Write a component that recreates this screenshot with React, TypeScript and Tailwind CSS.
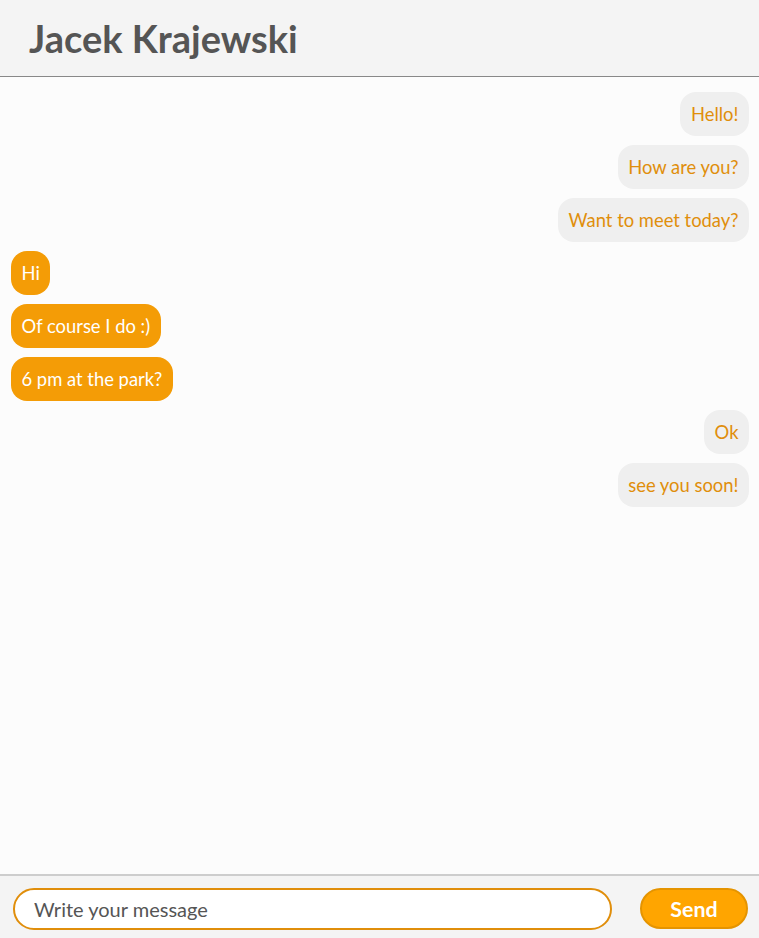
import React from 'react';

type Msg = { text: string; mine: boolean };

const messages: Msg[] = [
  { text: 'Hello!', mine: false },
  { text: 'How are you?', mine: false },
  { text: 'Want to meet today?', mine: false },
  { text: 'Hi', mine: true },
  { text: 'Of course I do :)', mine: true },
  { text: '6 pm at the park?', mine: true },
  { text: 'Ok', mine: false },
  { text: 'see you soon!', mine: false },
];

export default function App() {
  return (
    <div className="flex h-screen flex-col bg-[#fcfcfc] font-['Lato',sans-serif]">
      <header className="flex h-[77px] shrink-0 items-center border-b border-[#888] bg-[#f4f4f4] pl-[29px]">
        <h1 className="text-[38px] font-bold leading-none text-[#555] pb-[1px]">Jacek Krajewski</h1>
      </header>

      <main className="flex flex-1 flex-col gap-[9px] pl-[11px] pr-[10px] pt-[15px]">
        {messages.map((m, i) => (
          <div key={i} className={`flex ${m.mine ? 'justify-start' : 'justify-end'}`}>
            <div
              className={`flex h-[44px] items-center rounded-[16px] px-[10.5px] pt-[2px] text-[18.4px] ${
                m.mine ? 'bg-[#f49c06] text-white' : 'bg-[#efefef] text-[#e08e0b]'
              }`}
            >
              {m.text}
            </div>
          </div>
        ))}
      </main>

      <footer className="flex h-[64px] shrink-0 items-start gap-[28px] border-t-2 border-[#cdcdcd] bg-[#f4f4f4] pl-[13px] pr-[11px] pt-[12px]">
        <input
          className="h-[42px] flex-1 rounded-full border-2 border-[#e08e0b] bg-white px-[19px] text-[20px] text-[#555] outline-none placeholder:text-[#555]"
          placeholder="Write your message"
        />
        <button className="h-[41px] w-[108px] rounded-full border-2 border-[#e59400] bg-[#ffa500] pt-[2px] text-[21.4px] font-bold text-white">
          Send
        </button>
      </footer>
    </div>
  );
}
